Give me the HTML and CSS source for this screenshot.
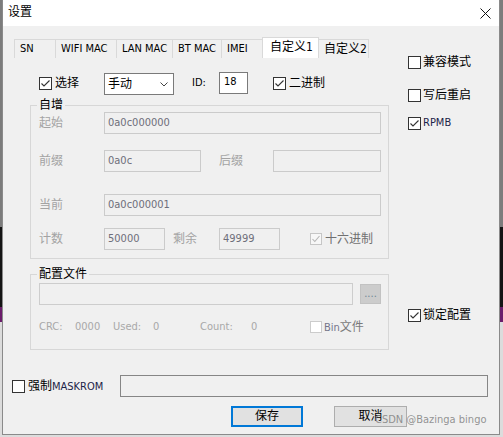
FILE: index.html
```html
<!DOCTYPE html>
<html lang="zh">
<head>
<meta charset="utf-8">
<title>设置</title>
<link rel="stylesheet" href="styles.css">
</head>
<body>
<div class="window">
  <div class="titlebar">
    <span class="title">设置</span>
    <svg class="close" width="11" height="11" viewBox="0 0 11 11"><path d="M0.5 0.5L10.5 10.5M10.5 0.5L0.5 10.5" stroke="#111" stroke-width="1" fill="none"/></svg>
  </div>
  <div class="client">
    <div class="top">
      <div class="leftcol">
        <div class="tabs">
          <div class="tab t-sn">SN</div>
          <div class="tab t-wifi">WIFI MAC</div>
          <div class="tab t-lan">LAN MAC</div>
          <div class="tab t-bt">BT MAC</div>
          <div class="tab t-imei">IMEI</div>
          <div class="tab sel">自定义1</div>
          <div class="tab t-c2">自定义2</div>
        </div>
        <div class="row1">
          <div class="chk sel-chk"><span class="cb"><svg width="11" height="11" viewBox="0 0 11 11"><polyline points="1.5,5.5 4,8 9.5,2.5" fill="none" stroke="#333" stroke-width="1.1"/></svg></span><span class="t">选择</span></div>
          <div class="select"><span>手动</span><svg width="8" height="5" viewBox="0 0 8 5"><polyline points="0.5,0.5 4,4 7.5,0.5" fill="none" stroke="#444" stroke-width="1"/></svg></div>
          <span class="idlbl">ID:</span>
          <div class="idedit">18</div>
          <div class="chk bin"><span class="cb"><svg width="11" height="11" viewBox="0 0 11 11"><polyline points="1.5,5.5 4,8 9.5,2.5" fill="none" stroke="#333" stroke-width="1.1"/></svg></span><span class="t">二进制</span></div>
        </div>
        <fieldset class="grp g1">
          <legend>自增</legend>
          <div class="frow">
            <span class="lbl lw">起始</span>
            <div class="dedit wide">0a0c000000</div>
          </div>
          <div class="frow m16">
            <span class="lbl lw">前缀</span>
            <div class="dedit pre">0a0c</div>
            <span class="lbl suf">后缀</span>
            <div class="dedit sufv"></div>
          </div>
          <div class="frow m22">
            <span class="lbl lw">当前</span>
            <div class="dedit wide">0a0c000001</div>
          </div>
          <div class="frow m12">
            <span class="lbl lw">计数</span>
            <div class="dedit num">50000</div>
            <span class="lbl rem">剩余</span>
            <div class="dedit num">49999</div>
            <div class="chk hex"><span class="cb dis"><svg width="10" height="10" viewBox="0 0 10 10"><polyline points="1.5,5 3.8,7.5 8.5,2" fill="none" stroke="#b5b5b5" stroke-width="1.1"/></svg></span><span class="t hext">十六进制</span></div>
          </div>
        </fieldset>
        <fieldset class="grp g2">
          <legend>配置文件</legend>
          <div class="frow">
            <div class="fedit"></div>
            <div class="dots">....</div>
          </div>
          <div class="info">
            <span class="i1">CRC:</span>
            <span class="i2">0000</span>
            <span class="i3">Used:</span>
            <span class="i4">0</span>
            <span class="i5">Count:</span>
            <span class="i6">0</span>
            <span class="cb dis2"></span>
            <span class="bint"><span class="la">Bin</span>文件</span>
          </div>
        </fieldset>
      </div>
      <div class="rightcol">
        <div class="ropt"><span class="cb"></span><span class="t">兼容模式</span></div>
        <div class="ropt r2"><span class="cb"></span><span class="t">写后重启</span></div>
        <div class="ropt r3"><span class="cb"><svg width="11" height="11" viewBox="0 0 11 11"><polyline points="1.5,5.5 4,8 9.5,2.5" fill="none" stroke="#333" stroke-width="1.1"/></svg></span><span class="t la dk">RPMB</span></div>
        <div class="ropt r4"><span class="cb"><svg width="11" height="11" viewBox="0 0 11 11"><polyline points="1.5,5.5 4,8 9.5,2.5" fill="none" stroke="#333" stroke-width="1.1"/></svg></span><span class="t">锁定配置</span></div>
      </div>
    </div>
    <div class="mrow">
      <div class="chk mchk"><span class="cb"></span><span class="t">强制<span class="la dk">MASKROM</span></span></div>
      <div class="medit"></div>
    </div>
    <div class="brow">
      <div class="btn def">保存</div>
      <div class="btn cancel">取消</div>
    </div>
  </div>
  <div class="watermark">CSDN @Bazinga bingo</div>
</div>
</body>
</html>
```
FILE: styles.css
```css
html, body {
  margin: 0;
  padding: 0;
}
body {
  width: 503px;
  height: 437px;
  overflow: hidden;
  background: linear-gradient(#7c7c7c 0 227px, #141414 227px 307px, #6b1d6b 307px 322px, #dcdcdc 322px);
  font-family: "DejaVu Sans Condensed", "DejaVu Sans", "Noto Sans CJK SC", sans-serif;
  font-stretch: condensed;
  font-size: 12px;
  line-height: 14px;
  color: #000;
}
.window {
  position: relative;
  box-sizing: border-box;
  margin-left: 2px;
  width: 498px;
  height: 435px;
  border: 1px solid #8a8a8a;
  border-top: 0;
  background: #f0f0f0;
  display: flex;
  flex-direction: column;
}
.titlebar {
  height: 26px;
  flex: none;
  background: #fff;
  display: flex;
  align-items: center;
  justify-content: space-between;
  padding: 0 8px 0 5px;
}
.title {
  font-size: 12px;
  margin-top: -2px;
}
.close {
  display: block;
  margin-top: 1px;
}
.client {
  flex: 1;
  padding-top: 11px;
}
.top {
  display: flex;
  align-items: flex-start;
}
.leftcol {
  margin-left: 11px;
  width: 376px;
  flex: none;
}
.rightcol {
  margin-left: 18px;
  padding-top: 18px;
}

/* tabs */
.tabs {
  display: flex;
  align-items: flex-end;
  height: 21px;
}
.tab {
  box-sizing: border-box;
  height: 19px;
  border-top: 1px solid #d9d9d9;
  border-left: 1px solid #d9d9d9;
  padding-left: 5px;
  font-size: 11px;
  line-height: 18px;
  white-space: nowrap;
}
.t-sn { width: 41px; }
.t-wifi { width: 61px; }
.t-lan { width: 56px; }
.t-bt { width: 49px; }
.t-imei { width: 41px; }
.tab.sel {
  width: 57px;
  height: 21px;
  background: #fff;
  border-right: 1px solid #d9d9d9;
  padding-left: 7px;
  font-size: 12px;
  line-height: 19px;
}
.t-c2 {
  width: 50px;
  border-left: 0;
  border-right: 1px solid #d9d9d9;
  font-size: 12px;
}

/* checkboxes */
.chk {
  display: flex;
  align-items: center;
  flex: none;
}
.cb {
  box-sizing: border-box;
  display: block;
  width: 13px;
  height: 13px;
  border: 1px solid #333;
  background: #fff;
  flex: none;
}
.cb svg {
  display: block;
}
.cb.dis {
  width: 12px;
  height: 12px;
  border-color: #c6c6c6;
  background: #f7f7f7;
}
.cb.dis2 {
  width: 12px;
  height: 12px;
  border-color: #cccccc;
  background: #fff;
}
.chk .t {
  margin-left: 3px;
  white-space: nowrap;
}
.la {
  font-size: 11px;
}
.dk {
  color: #1c2448;
}

/* row 1 */
.row1 {
  display: flex;
  align-items: center;
  height: 22px;
  margin-top: 14px;
  padding-left: 25px;
}
.sel-chk {
  width: 65px;
}
.select {
  box-sizing: border-box;
  width: 70px;
  height: 22px;
  margin-top: 2px;
  border: 1px solid #7a7a7a;
  background: #fff;
  display: flex;
  align-items: center;
  justify-content: space-between;
  padding: 0 5px 0 3px;
  flex: none;
}
.select svg {
  display: block;
}
.idlbl {
  margin-left: 18px;
  width: 27px;
  font-size: 11px;
  flex: none;
}
.idedit {
  box-sizing: border-box;
  width: 29px;
  height: 22px;
  border: 1px solid #7a7a7a;
  background: #fff;
  padding-left: 4px;
  font-size: 11px;
  line-height: 18px;
  flex: none;
}
.bin {
  margin-left: 25px;
}

/* group boxes */
.grp {
  box-sizing: border-box;
  width: 359px;
  min-width: 0;
  margin: 4px 0 0 16px;
  padding: 0 7px 8px 8px;
  border: 1px solid #d7d7d7;
}
.grp legend {
  padding: 0 2px;
  margin-left: -2px;
  font-size: 12px;
  line-height: 14px;
  color: #000;
}
.g2 {
  margin-top: 8px;
  padding: 2px 7px 15px 8px;
}
.frow {
  display: flex;
  align-items: center;
  height: 22px;
}
.m16 { margin-top: 16px; }
.m22 { margin-top: 22px; }
.m12 { margin-top: 12px; }
.lbl {
  color: #a3a3a3;
  flex: none;
}
.lw { width: 65px; }
.suf { margin-left: 18px; width: 54px; }
.rem { margin-left: 8px; width: 46px; }
.dedit {
  box-sizing: border-box;
  height: 22px;
  border: 1px solid #cbcbcb;
  padding-left: 3px;
  color: #6e6e7a;
  font-size: 11px;
  line-height: 20px;
  flex: none;
}
.wide { width: 277px; }
.pre { width: 97px; }
.sufv { width: 108px; }
.num { width: 61px; }
.hex {
  margin-left: 30px;
}
.hext {
  color: #707070;
}
.fedit {
  box-sizing: border-box;
  width: 314px;
  height: 22px;
  border: 1px solid #cdcdcd;
  flex: none;
}
.dots {
  box-sizing: border-box;
  width: 21px;
  height: 20px;
  margin-left: 7px;
  background: #cccccc;
  border: 1px solid #c2c2c2;
  font-size: 11px;
  line-height: 17px;
  color: #6f8796;
  text-align: center;
  flex: none;
}
.info {
  display: flex;
  align-items: center;
  height: 14px;
  margin-top: 15px;
  font-size: 11px;
  color: #a8a8a8;
}
.info > span { flex: none; }
.i1 { width: 36px; }
.i2 { width: 38px; }
.i3 { width: 40px; }
.i4 { width: 47px; }
.i5 { width: 51px; }
.i6 { width: 59px; }
.bint {
  margin-left: 2px;
  font-size: 12px;
  color: #7a7a7a;
}
.bint .la {
  color: #75758a;
}

/* right column */
.ropt {
  display: flex;
  align-items: center;
  height: 14px;
}
.ropt .t {
  margin-left: 2px;
  white-space: nowrap;
}
.r2 { margin-top: 19px; }
.r3 { margin-top: 14px; }
.r4 { margin-top: 178px; }

/* bottom */
.mrow {
  display: flex;
  align-items: center;
  height: 22px;
  margin-top: 25px;
  padding-left: 9px;
}
.mchk {
  width: 108px;
}
.medit {
  box-sizing: border-box;
  width: 368px;
  height: 22px;
  border: 1px solid #868686;
  flex: none;
}
.brow {
  display: flex;
  margin-top: 9px;
  padding-left: 228px;
}
.btn {
  box-sizing: border-box;
  width: 72px;
  height: 21px;
  background: #e1e1e1;
  border: 1px solid #adadad;
  text-align: center;
  line-height: 18px;
  flex: none;
}
.btn.def {
  border: 2px solid #0078d7;
  line-height: 17px;
}
.btn.cancel {
  margin-left: 31px;
  width: 73px;
}
.watermark {
  position: absolute;
  left: 372px;
  top: 413px;
  font-size: 11px;
  line-height: 13px;
  color: rgba(128, 128, 128, 0.85);
  white-space: nowrap;
}
```
